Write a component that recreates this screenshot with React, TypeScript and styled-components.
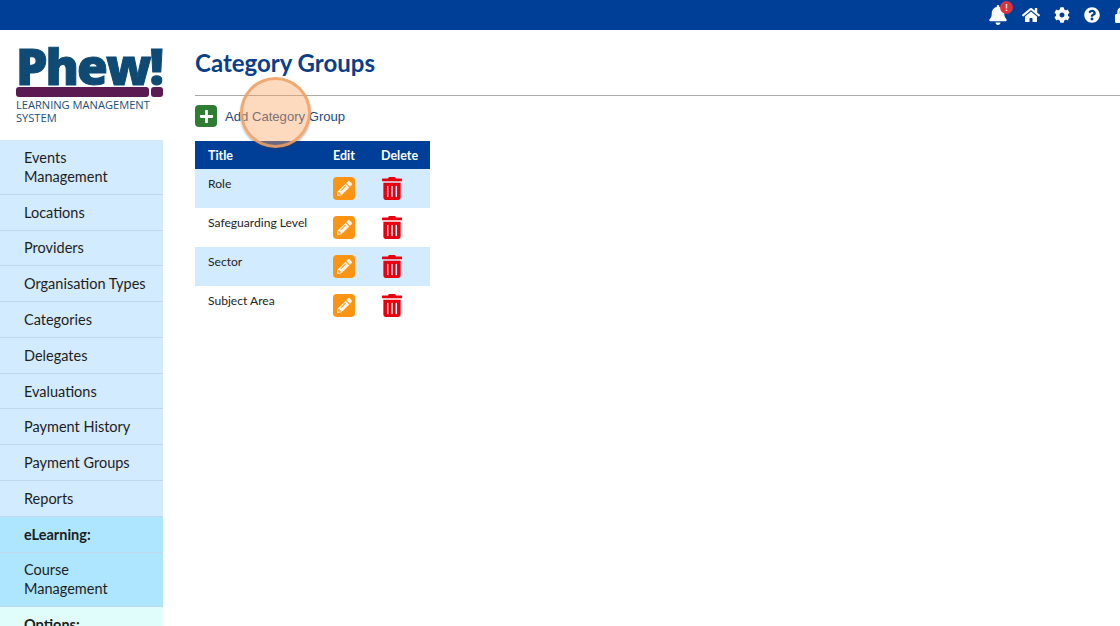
import React from "react";
import styled, { createGlobalStyle } from "styled-components";
import {
  FaBell,
  FaCog,
  FaHome,
  FaLock,
  FaPencilAlt,
  FaPlus,
  FaQuestionCircle,
  FaTrashAlt,
} from "react-icons/fa";

const GlobalStyle = createGlobalStyle`
  html, body {
    margin: 0;
    height: 100%;
    overflow: hidden;
    background: #fff;
    font-family: "Lato", "Open Sans", sans-serif;
  }
`;

const Page = styled.div`
  position: relative;
  width: 1120px;
  height: 626px;
  overflow: hidden;
`;

const TopBar = styled.header`
  height: 30px;
  background: #003f98;
  display: flex;
  justify-content: flex-end;
  align-items: center;
  gap: 14px;
  margin-right: -10px;
  color: #fff;
`;

const BellWrap = styled.span`
  position: relative;
  display: flex;
`;

const Badge = styled.span`
  position: absolute;
  top: -4px;
  right: -5px;
  width: 13px;
  height: 13px;
  border-radius: 50%;
  background: #d9333f;
  color: #fff;
  font-size: 9px;
  line-height: 13px;
  text-align: center;
  font-weight: 700;
`;

const Body = styled.div`
  display: flex;
`;

const Sidebar = styled.nav`
  width: 163px;
  flex-shrink: 0;
`;

const LogoBox = styled.div`
  height: 110px;
  padding: 15px 0 0 16px;
  box-sizing: border-box;
`;

const LogoWord = styled.div`
  font-family: "Open Sans", sans-serif;
  font-weight: 800;
  font-size: 50px;
  line-height: 42px;
  height: 42px;
  letter-spacing: -2px;
  color: #0e4a73;
  -webkit-text-stroke: 1px #0e4a73;
  white-space: nowrap;
`;

const LogoBar = styled.div`
  display: flex;
  gap: 2px;
  width: 147px;
  height: 10px;
`;

const LogoBarLong = styled.div`
  flex: 1;
  background: #5c1a52;
  border-radius: 3px;
`;

const LogoBarDot = styled.div`
  width: 12px;
  background: #5c1a52;
  border-radius: 3px;
`;

const LogoCaption = styled.div`
  margin-top: 2px;
  font-family: "Open Sans", sans-serif;
  font-size: 11.1px;
  font-weight: 500;
  line-height: 12.5px;
  color: #1c5078;
  width: 146px;
`;

const NavItem = styled.a<{ $tone?: "plain" | "section" | "options"; $bold?: boolean }>`
  display: block;
  box-sizing: border-box;
  padding: 7.9px 16px 7.9px 24px;
  font-size: 14.5px;
  line-height: 19px;
  color: #1d1d1d;
  font-weight: ${(p) => (p.$bold ? 700 : 400)};
  border-bottom: 1px solid #bfd9ea;
  background: ${(p) =>
    p.$tone === "section" ? "#aee6ff" : p.$tone === "options" ? "#e0fdfb" : "#d3ebff"};
`;

const Main = styled.main`
  flex: 1;
  padding-left: 32px;
`;

const Title = styled.h1`
  margin: 0;
  height: 66px;
  box-sizing: border-box;
  padding-top: 17px;
  font-size: 24px;
  line-height: 32px;
  font-weight: 700;
  color: #0b4088;
  border-bottom: 1px solid #a9a9a9;
`;

const AddRow = styled.div`
  display: flex;
  align-items: center;
  gap: 8px;
  margin-top: 9px;
  height: 22px;
`;

const AddIcon = styled.span`
  width: 22px;
  height: 22px;
  border-radius: 4px;
  background: #2f7d32;
  color: #fff;
  display: flex;
  align-items: center;
  justify-content: center;
  font-size: 15px;
`;

const AddLabel = styled.a`
  font-family: "Liberation Sans", Arial, sans-serif;
  font-size: 13.1px;
  color: #1c4a80;
`;

const Table = styled.table`
  margin-top: 14px;
  width: 235px;
  border-collapse: collapse;
  table-layout: fixed;
`;

const HeadCell = styled.th<{ $w: number; $pad?: number }>`
  width: ${(p) => p.$w}px;
  height: 28px;
  box-sizing: border-box;
  padding: 0 0 0 ${(p) => p.$pad ?? 0}px;
  background: #003f98;
  color: #fff;
  font-size: 12.5px;
  font-weight: 700;
  text-align: left;
`;

const Row = styled.tr<{ $striped: boolean }>`
  height: 39px;
  background: ${(p) => (p.$striped ? "#d3ebff" : "#fff")};
`;

const TitleCell = styled.td`
  padding: 6px 0 0 13px;
  vertical-align: top;
  font-size: 12.1px;
  line-height: 18px;
  color: #222;
  white-space: nowrap;
`;

const IconCell = styled.td`
  padding: 8px 0 0;
  vertical-align: top;
`;

const EditButton = styled.span`
  width: 22px;
  height: 23px;
  border-radius: 4px;
  background: #fb9412;
  color: #fff3e4;
  display: flex;
  align-items: center;
  justify-content: center;
  font-size: 15px;
`;

const DeleteButton = styled.span`
  display: flex;
  width: 22px;
  height: 23px;
  justify-content: center;
  color: #e8000f;
  font-size: 23px;
`;

const Highlight = styled.div`
  position: absolute;
  left: 240px;
  top: 77px;
  width: 71px;
  height: 71px;
  box-sizing: border-box;
  border-radius: 50%;
  background: rgba(250, 165, 100, 0.42);
  border: 3px solid rgba(240, 160, 100, 0.85);
  box-shadow: 0 2px 2px rgba(70, 60, 60, 0.35);
`;

const menu: { label: string; tone?: "plain" | "section" | "options"; bold?: boolean }[] = [
  { label: "Events Management" },
  { label: "Locations" },
  { label: "Providers" },
  { label: "Organisation Types" },
  { label: "Categories" },
  { label: "Delegates" },
  { label: "Evaluations" },
  { label: "Payment History" },
  { label: "Payment Groups" },
  { label: "Reports" },
  { label: "eLearning:", tone: "section", bold: true },
  { label: "Course Management", tone: "section" },
  { label: "Options:", tone: "options", bold: true },
];

const groups = ["Role", "Safeguarding Level", "Sector", "Subject Area"];

export default function App() {
  return (
    <Page>
      <GlobalStyle />
      <TopBar>
        <BellWrap>
          <FaBell size={20} />
          <Badge>!</Badge>
        </BellWrap>
        <FaHome size={18} />
        <FaCog size={16} />
        <FaQuestionCircle size={16} />
        <FaLock size={16} />
      </TopBar>
      <Body>
        <Sidebar>
          <LogoBox>
            <LogoWord>Phew!</LogoWord>
            <LogoBar>
              <LogoBarLong />
              <LogoBarDot />
            </LogoBar>
            <LogoCaption>LEARNING MANAGEMENT SYSTEM</LogoCaption>
          </LogoBox>
          {menu.map((item) => (
            <NavItem key={item.label} $tone={item.tone} $bold={item.bold}>
              {item.label}
            </NavItem>
          ))}
        </Sidebar>
        <Main>
          <Title>Category Groups</Title>
          <AddRow>
            <AddIcon>
              <FaPlus />
            </AddIcon>
            <AddLabel>Add Category Group</AddLabel>
          </AddRow>
          <Table>
            <thead>
              <tr>
                <HeadCell $w={138} $pad={13}>Title</HeadCell>
                <HeadCell $w={48}>Edit</HeadCell>
                <HeadCell $w={49}>Delete</HeadCell>
              </tr>
            </thead>
            <tbody>
              {groups.map((group, index) => (
                <Row key={group} $striped={index % 2 === 0}>
                  <TitleCell>{group}</TitleCell>
                  <IconCell>
                    <EditButton>
                      <FaPencilAlt />
                    </EditButton>
                  </IconCell>
                  <IconCell>
                    <DeleteButton>
                      <FaTrashAlt />
                    </DeleteButton>
                  </IconCell>
                </Row>
              ))}
            </tbody>
          </Table>
        </Main>
      </Body>
      <Highlight />
    </Page>
  );
}
